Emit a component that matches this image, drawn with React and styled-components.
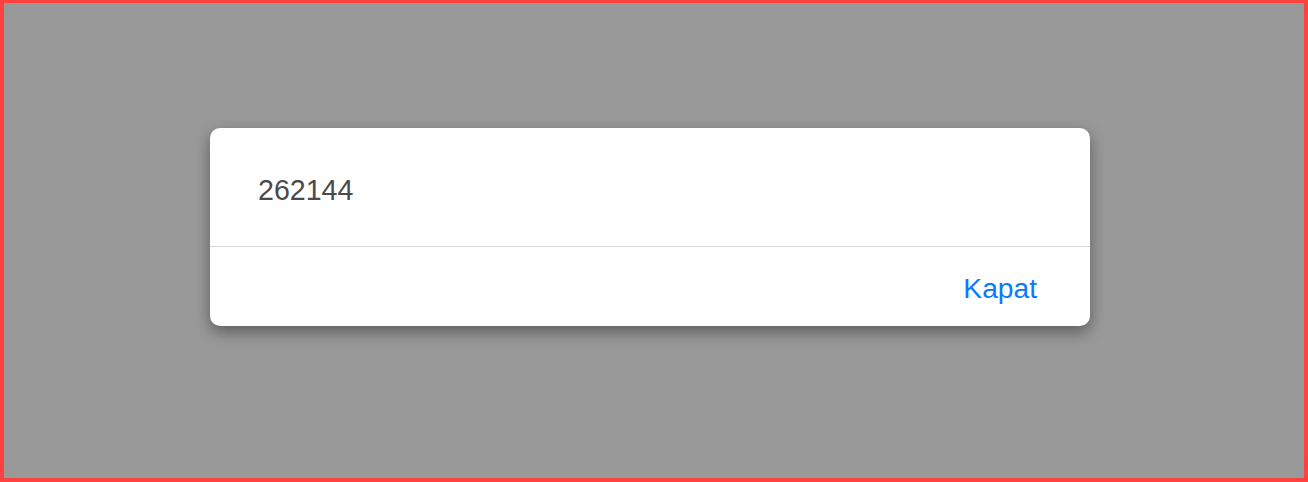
import styled, { createGlobalStyle } from 'styled-components';

const GlobalStyle = createGlobalStyle`
  html, body {
    margin: 0;
    padding: 0;
    height: 100%;
  }
  #root {
    height: 100%;
  }
  * {
    box-sizing: border-box;
  }
`;

export default function App() {
  return (
    <>
      <GlobalStyle />
      <Overlay>
        <Dialog>
          <Message>262144</Message>
          <Footer>
            <CloseButton type="button">Kapat</CloseButton>
          </Footer>
        </Dialog>
      </Overlay>
    </>
  );
}

const Overlay = styled.div`
  height: 482px;
  width: 1308px;
  background: #999999;
  border: 4px solid #fd4240;
  border-top-width: 3px;
  padding: 125px 0 0 206px;
  font-family: 'Liberation Sans', Arial, sans-serif;
`;

const Dialog = styled.div`
  width: 880px;
  background: #ffffff;
  border-radius: 10px;
  box-shadow: 0 6px 16px rgba(0, 0, 0, 0.4);
  overflow: hidden;
`;

const Message = styled.div`
  height: 119px;
  padding: 45px 48px 0;
  font-size: 28.6px;
  line-height: 34px;
  color: #4a4a4a;
  border-bottom: 1px solid #d9d9d9;
`;

const Footer = styled.div`
  height: 79px;
  display: flex;
  align-items: center;
  justify-content: flex-end;
  padding: 2px 53px 0 0;
`;

const CloseButton = styled.button`
  border: 0;
  background: none;
  padding: 0;
  font: inherit;
  font-size: 28.2px;
  line-height: 34px;
  color: #0a7aff;
  cursor: pointer;
`;
